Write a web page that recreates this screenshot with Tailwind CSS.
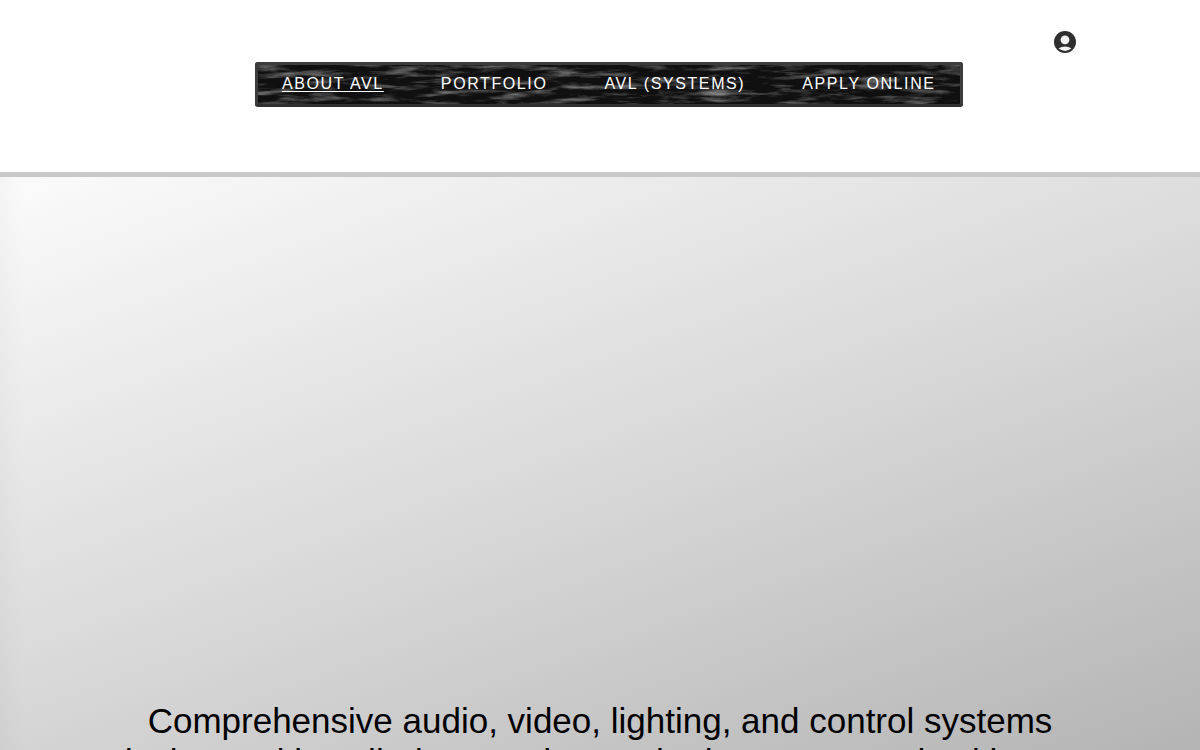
<!DOCTYPE html>
<html>
<head>
<meta charset="utf-8">
<script src="https://cdn.jsdelivr.net/npm/@tailwindcss/browser@4"></script>
</head>
<body class="bg-white overflow-hidden font-['Liberation_Sans',sans-serif]">
<div class="h-[750px] overflow-hidden flex flex-col">
  <header class="relative h-[172px] shrink-0 bg-white">
    <div class="flex justify-end pt-[31px] pr-[124px]">
      <svg class="w-[22px] h-[22px]" viewBox="0 0 22 22"><circle cx="11" cy="11" r="11" fill="#2e2e2e"/><circle cx="11" cy="8.800" r="4.400" fill="#f2f2f2"/><path d="M4.500 17.200Q11 13.800 17.500 17.200Q11 22.600 4.500 17.200z" fill="#f2f2f2"/></svg>
    </div>
    <nav class="absolute left-[255px] top-[62px] w-[708px] h-[45px] rounded-[3px] border-[3px] border-[#3c3c3c] border-b-[#303030] bg-[#101010] overflow-hidden">
      <svg class="absolute inset-0 w-full h-full" xmlns="http://www.w3.org/2000/svg">
        <filter id="water" x="0" y="0" width="100%" height="100%">
          <feTurbulence type="fractalNoise" baseFrequency="0.025 0.16" numOctaves="5" seed="11"/>
          <feColorMatrix type="matrix" values="0 0 0 0 0.42  0 0 0 0 0.42  0 0 0 0 0.42  1.600 0 0 0 -0.74"/>
        </filter>
        <rect width="100%" height="100%" filter="url(#water)"/>
      </svg>
      <div class="relative h-full flex items-center pl-[24px] pb-[2px] gap-[57px] text-white text-[16px] tracking-[1.6px]">
        <a class="underline underline-offset-2 whitespace-nowrap">ABOUT AVL</a>
        <a class="whitespace-nowrap">PORTFOLIO</a>
        <a class="whitespace-nowrap">AVL (SYSTEMS)</a>
        <a class="whitespace-nowrap">APPLY ONLINE</a>
      </div>
    </nav>
  </header>
  <div class="h-[5px] shrink-0 bg-[#c8c8c8]"></div>
  <main class="flex-1 bg-[linear-gradient(160deg,#fbfbfb_0%,#d8d8d8_52%,#b4b4b4_100%)] shadow-[inset_24px_0_30px_-24px_rgba(0,0,0,0.05)] pt-[523px] overflow-hidden">
    <p class="text-center text-[35px] leading-[41px] text-black whitespace-nowrap">Comprehensive audio, video, lighting, and control systems<br>design and installed everywhere Whether you're rush with your</p>
  </main>
</div>
</body>
</html>
